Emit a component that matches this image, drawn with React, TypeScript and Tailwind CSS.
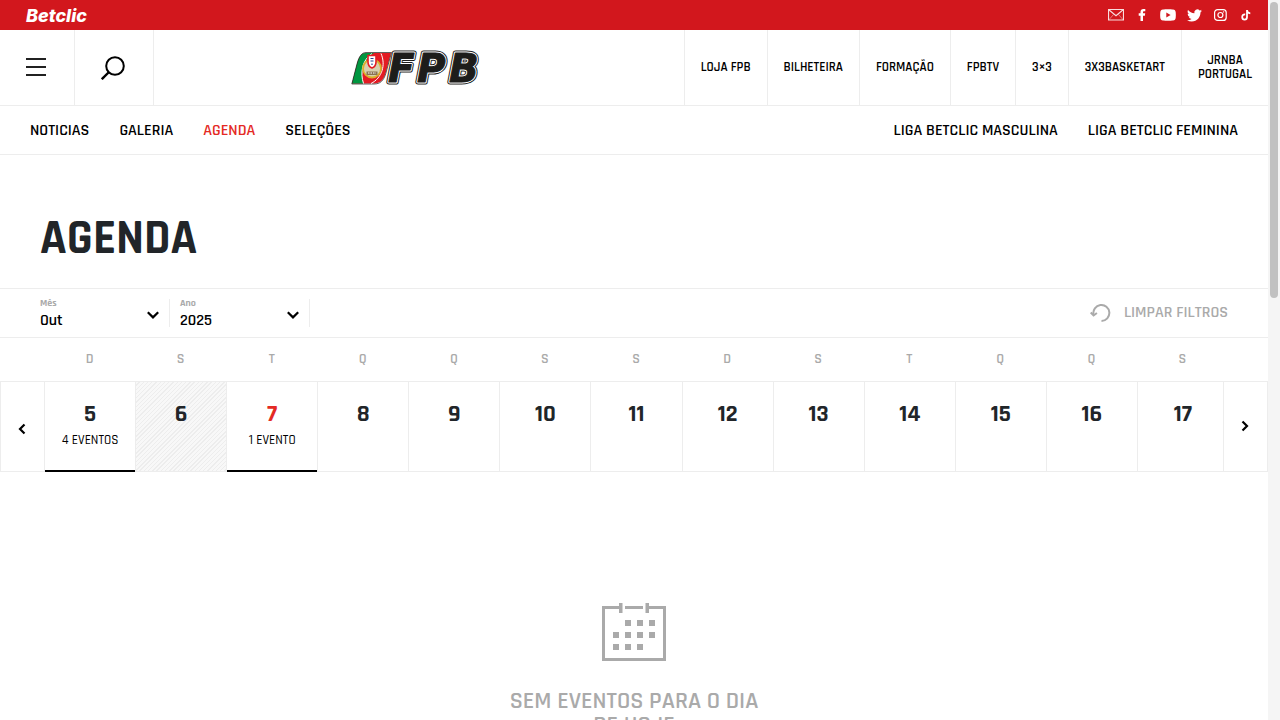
import type { ReactNode } from 'react';

const topLinks = ['LOJA FPB', 'BILHETEIRA', 'FORMAÇÃO', 'FPBTV', '3×3', '3X3BASKETART', 'JRNBA PORTUGAL'];

const days: { weekday: string; day: number; events?: string; past?: boolean; today?: boolean }[] = [
  { weekday: 'D', day: 5, events: '4 EVENTOS' },
  { weekday: 'S', day: 6, past: true },
  { weekday: 'T', day: 7, events: '1 EVENTO', today: true },
  { weekday: 'Q', day: 8 },
  { weekday: 'Q', day: 9 },
  { weekday: 'S', day: 10 },
  { weekday: 'S', day: 11 },
  { weekday: 'D', day: 12 },
  { weekday: 'S', day: 13 },
  { weekday: 'T', day: 14 },
  { weekday: 'Q', day: 15 },
  { weekday: 'Q', day: 16 },
  { weekday: 'S', day: 17 },
];

function Social({ label, children }: { label: string; children: ReactNode }) {
  return (
    <a href="#" aria-label={label} className="flex h-4 w-4 items-center justify-center">
      {children}
    </a>
  );
}

function SocialLinks() {
  return (
    <div className="flex items-center gap-[10px]">
      <Social label="Email">
        <svg width="16" height="12" viewBox="0 0 16 12" className="shrink-0" fill="none" stroke="#fff" strokeOpacity="0.85">
          <path d="M.5.5h15v10.500H.5zM.8.8 8 6.800l7.200-6" strokeWidth="1.200" />
          <path d="M1 10.700 5.500 5.500M15 10.700l-4.500-5.200" strokeWidth=".5" />
        </svg>
      </Social>
      <Social label="Facebook">
        <svg width="8" height="12" viewBox="0 0 8 12" fill="#fff">
          <path d="M2.500 12V6.700H.7V4.300h1.800V3c0-1.900 1.100-3 2.900-3 .8 0 1.500.1 1.900.1v2.100H6.100c-.9 0-1.100.5-1.100 1.100v1h2.200l-.3 2.400H5V12z" />
        </svg>
      </Social>
      <Social label="YouTube">
        <svg width="16" height="12" viewBox="0 0 16 12" className="shrink-0">
          <path d="M3 .4C5 .1 11 .1 13 .4c1.700.2 2.600 1.200 2.700 2.800.2 1.800.2 3.800 0 5.600-.1 1.600-1 2.600-2.700 2.800-2 .3-8 .3-10 0C1.300 11.400.4 10.400.3 8.800.1 7 .1 5 .3 3.200.4 1.600 1.300.6 3 .4z" fill="#fff" />
          <path d="M6.300 3.500v5L10.600 6z" fill="#d2171d" />
        </svg>
      </Social>
      <Social label="Twitter">
        <svg width="15" height="15" viewBox="0 0 24 24" fill="#fff">
          <path d="M23.950 4.570a10 10 0 0 1-2.820.77 4.960 4.960 0 0 0 2.160-2.720c-.95.55-2 .95-3.130 1.180a4.920 4.920 0 0 0-8.380 4.480C7.690 8.100 4.070 6.130 1.640 3.160a4.820 4.820 0 0 0-.67 2.480c0 1.710.87 3.210 2.190 4.100a4.900 4.900 0 0 1-2.230-.62v.06a4.920 4.920 0 0 0 3.950 4.830 5 5 0 0 1-2.210.08 4.940 4.940 0 0 0 4.600 3.420A9.870 9.870 0 0 1 0 19.540a14 14 0 0 0 7.550 2.210c9.050 0 14-7.500 14-13.980 0-.21 0-.42-.02-.63a9.940 9.940 0 0 0 2.460-2.550z" />
        </svg>
      </Social>
      <Social label="Instagram">
        <svg width="13" height="12" viewBox="0 0 13 12" fill="none" stroke="#fff" strokeWidth="1.200">
          <rect x=".6" y=".6" width="11.600" height="10.800" rx="3" />
          <circle cx="6.400" cy="6" r="2.500" />
          <circle cx="9.700" cy="2.900" r=".4" fill="#fff" strokeWidth=".6" />
        </svg>
      </Social>
      <Social label="TikTok">
        <svg width="10" height="12" viewBox="0 0 10 12" fill="none" stroke="#fff" strokeWidth="1.800">
          <path d="M4.200 5.500C2.300 5.300 1.200 6.300 1.200 8c0 1.600 1.100 2.600 2.400 2.600S6 9.500 6 8V1c0 1.800 1.300 3.200 3.300 3.300" />
        </svg>
      </Social>
    </div>
  );
}

function FpbLogo() {
  const letters = (
    <>
      <text x="37" y="31">F</text>
      <text x="66" y="31">P</text>
      <text x="98" y="31">B</text>
    </>
  );
  return (
    <svg width="136" height="52" viewBox="0 -9 136 52" role="img" aria-label="FPB">
      <path d="M15 2H40L34.500 22.500C32.500 29 29 32.500 23 32.500H1L6 13C8 5 11 2 15 2z" fill="#e31b23" />
      <path d="M15 2H23C12 8 9 22 12.500 32.500H1L6 13C8 5 11 2 15 2z" fill="#009640" />
      <path d="M15 1.500H40.500L34.800 22.500C32.500 30 29 33 23 33H.8L6 13C8 5 11 1.500 15 1.500z" fill="none" stroke="#1d1d1b" strokeWidth=".7" />
      <path d="M21 2.500C11 9 9 22 12.500 32.500M30 2.500C35 14 31 27 20 32.500" fill="none" stroke="#fff" strokeWidth="1" />
      <circle cx="21" cy="17.500" r="9" fill="#d8cfae" stroke="#d9b02a" strokeWidth="1.800" />
      <path d="M15.500 20.500h11v3.500h-11z" fill="#8a7350" />
      <path d="M17 22h8" stroke="#fff" strokeWidth="1" strokeDasharray="1.500 1" />
      <path d="M17 4.500h8V11c0 3.500-1.500 5-4 6-2.500-1-4-2.500-4-6z" fill="#fff" stroke="#e31b23" strokeWidth="1.600" />
      <path d="M19.500 7.500h3M19.500 10h3M21 12.500v1.500" stroke="#24408e" strokeWidth="1.200" />
      <g className="font-['DejaVu_Sans',sans-serif] text-[39px] font-bold italic" fill="#1d1d1b" strokeLinejoin="round">
        <g stroke="#1d1d1b" strokeWidth="5">{letters}</g>
        <g stroke="#fff" strokeWidth="3">{letters}</g>
        <g stroke="#1d1d1b" strokeWidth="1">{letters}</g>
      </g>
    </svg>
  );
}

function Chevron({ className, d }: { className: string; d: string }) {
  return (
    <svg className={className} viewBox="0 0 12 12" fill="none" stroke="#000" strokeWidth="2.200" aria-hidden="true">
      <path d={d} />
    </svg>
  );
}

function Filter({ id, label, options, className }: { id: string; label: string; options: string[]; className: string }) {
  return (
    <div className={`relative flex h-7 flex-col border-r border-[#ededed] ${className}`}>
      <label htmlFor={id} className="text-[10px] leading-[8px] font-bold text-[#aaa]">
        {label}
      </label>
      <select id={id} className="h-7 w-full shrink-0 appearance-none bg-transparent text-base leading-7 font-semibold text-black outline-none">
        {options.map((o) => (
          <option key={o}>{o}</option>
        ))}
      </select>
      <Chevron className="pointer-events-none absolute top-[10px] right-[10px] h-3 w-3" d="M.8 3.200 6 8.400l5.200-5.200" />
    </div>
  );
}

function CalendarIcon() {
  const squares = [
    [23, 17], [35, 17], [47, 17],
    [11, 29], [23, 29], [35, 29], [47, 29],
    [11, 41], [23, 41], [35, 41],
  ];
  return (
    <svg width="64" height="59" viewBox="0 0 64 59" fill="#aaa" aria-hidden="true">
      <path d="M0 3h17v3H3v49h58V6H47V3h17v55H0z" />
      <path d="M17 0h3.500v10H17zM43.500 0H47v10h-3.500zM23 3h18v3H23z" />
      {squares.map(([x, y]) => (
        <rect key={`${x}-${y}`} x={x} y={y} width="6" height="6" />
      ))}
    </svg>
  );
}

export default function App() {
  return (
    <div className="flex h-screen overflow-hidden bg-white font-['Rajdhani','Roboto_Condensed',sans-serif] text-[#212529]">
      <div className="min-w-0 flex-1 overflow-hidden">
        <div className="flex h-[30px] items-center justify-between bg-[#d2171d] pr-[14px] pl-[26px]">
          <a href="#" className="pt-[2px] font-['Inter',sans-serif] text-[18px] leading-7 font-extrabold text-white italic">
            Betclic
          </a>
          <SocialLinks />
        </div>

        <header className="flex h-[76px] items-stretch border-b border-[#ededed]">
          <button type="button" aria-label="Menu" className="flex w-[75px] flex-col justify-center gap-[6px] border-r border-[#ededed] pb-[2px] pl-[26px]">
            <span className="h-[2px] w-5 bg-[#212121]" />
            <span className="h-[2px] w-5 bg-[#212121]" />
            <span className="h-[2px] w-5 bg-[#212121]" />
          </button>
          <button type="button" aria-label="Pesquisar" className="flex w-[79px] items-center justify-center border-r border-[#ededed] pr-[2px]">
            <svg width="24" height="24" viewBox="0 0 24 24" fill="none" stroke="#000" strokeWidth="2">
              <circle cx="14" cy="10" r="8.800" />
              <path d="M8 16 .8 23.200" strokeWidth="2.400" />
            </svg>
          </button>
          <div className="flex flex-1 items-center justify-center">
            <a href="#">
              <FpbLogo />
            </a>
          </div>
          <nav className="flex">
            {topLinks.map((l) => (
              <a
                key={l}
                href="#"
                className="flex items-center border-l border-[#ededed] px-4 pb-[2px] text-center text-[13px] leading-[14px] font-semibold text-black last:w-[87px]"
              >
                {l}
              </a>
            ))}
          </nav>
        </header>

        <nav className="flex h-[49px] items-center justify-between border-b border-[#ededed] px-[30px] pt-[2px] text-base font-semibold text-black">
          <div className="flex gap-[30px]">
            <a href="#">NOTICIAS</a>
            <a href="#">GALERIA</a>
            <a href="#" className="text-[#e42a24]">AGENDA</a>
            <a href="#">SELEÇÕES</a>
          </div>
          <div className="flex gap-[30px]">
            <a href="#">LIGA BETCLIC MASCULINA</a>
            <a href="#">LIGA BETCLIC FEMININA</a>
          </div>
        </nav>

        <main>
          <h1 className="px-10 pt-14 pb-5 text-5xl leading-[57px] font-bold">AGENDA</h1>

          <form className="flex h-[50px] items-center justify-between border-y border-[#ededed] px-10">
            <div className="flex">
              <Filter id="month" label="Mês" options={['Out', 'Nov', 'Dez']} className="w-[130px]" />
              <Filter id="year" label="Ano" options={['2025', '2026']} className="w-[140px] pl-[10px]" />
            </div>
            <button type="reset" className="flex items-center gap-3 text-base font-semibold text-[#aaa]">
              <svg width="22" height="18" viewBox="0 0 22 18" fill="none" stroke="#aaa" strokeWidth="2" aria-hidden="true">
                <path d="M3.500 10.500A8 8 0 1 1 11.500 17" />
                <path d="M.7 8.500 3.600 11.500l3.300-2.500" />
              </svg>
              LIMPAR FILTROS
            </button>
          </form>

          <div className="grid h-[43px] grid-cols-13 items-center pr-10 pb-[2px] pl-11 text-center text-sm font-semibold text-[#aaa]">
            {days.map((d) => (
              <span key={d.day}>{d.weekday}</span>
            ))}
          </div>

          <div className="flex h-[91px] border-t border-[#ededed]">
            <button type="button" aria-label="Dias anteriores" className="flex w-11 items-center justify-center border-b border-l border-[#ededed] pt-1 pr-[2px]">
              <Chevron className="h-3 w-3" d="M8.500 1.500 4 6l4.500 4.500" />
            </button>
            <div className="grid flex-1 grid-cols-13">
              {days.map((d) => (
                <button key={d.day} type="button" className="flex border-l border-[#ededed]">
                  <span
                    className={`flex h-full w-full flex-col items-center pt-5 ${
                      d.events ? 'border-b-2 border-black' : 'border-b border-[#ededed]'
                    } ${d.past ? 'bg-[repeating-linear-gradient(135deg,#f8f8f8_0px,#f8f8f8_2px,#ededed_2px,#ededed_3px)]' : ''}`}
                  >
                    <span className={`text-2xl leading-6 font-bold ${d.today ? 'text-[#e42a24]' : ''}`}>{d.day}</span>
                    {d.events && <span className="mt-[6px] text-[13px] leading-4 font-medium text-black">{d.events}</span>}
                  </span>
                </button>
              ))}
            </div>
            <button type="button" aria-label="Dias seguintes" className="z-10 -ml-[5px] flex w-[45px] items-center justify-center border-x border-b border-[#ededed] bg-white pr-[2px] pb-[2px]">
              <Chevron className="h-3 w-3" d="M3.500 1.500 8 6l-4.500 4.500" />
            </button>
          </div>

          <div className="flex flex-col items-center pt-[131px]">
            <CalendarIcon />
            <p className="mt-[27px] w-[270px] text-center text-2xl leading-6 font-semibold text-[#aaa]">SEM EVENTOS PARA O DIA DE HOJE</p>
          </div>
        </main>
      </div>
      <div className="w-3 shrink-0 bg-[#f5f5f5] px-[2px] pt-[2px]" aria-hidden="true">
        <div className="h-[41.2%] rounded-full bg-[#c1c1c1]" />
      </div>
    </div>
  );
}
